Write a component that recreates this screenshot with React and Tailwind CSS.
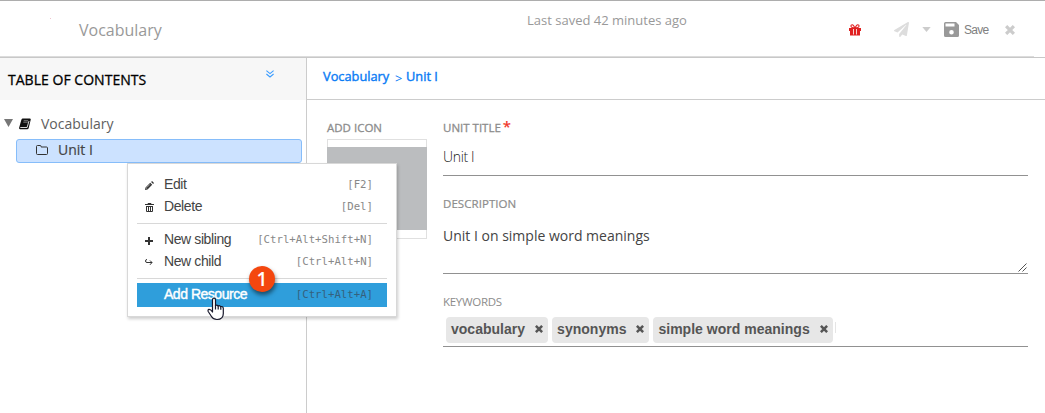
import React from "react";
import { FaPaperPlane } from "react-icons/fa";

function Cross({ className }) {
  return (
    <svg viewBox="0 0 10 10" className={className} fill="none" stroke="currentColor" strokeWidth="3.2">
      <path d="M1.100 1.100 8.900 8.900M8.900 1.100 1.100 8.900" />
    </svg>
  );
}

function Header() {
  return (
    <header className="relative flex h-[58px] shrink-0 border-t border-b border-t-[#adadad] border-b-[#c8c8c8] pl-[79px] text-[#999]">
      <span className="w-[448px] pt-[17px] text-[16px] leading-6">Vocabulary</span>
      <span className="w-[322px] pt-[9px] text-[13px] leading-5">Last saved 42 minutes ago</span>
      <div className="flex h-[57px] items-center">
        <svg viewBox="0 0 12 12" className="h-3 w-3" fill="#e02020">
          <path d="M0 4h12v3H0ZM1 7h10v4.500H1Z" />
          <path d="M5.700 4Q4.800.8 3.200.8 1.900.8 1.900 2.100 1.900 3.700 4 3.700H8Q10.100 3.700 10.100 2.100 10.100.8 8.800.8 7.200.8 6.300 4" fill="none" stroke="#e02020" strokeWidth="1.100" />
          <path d="M4.500 5v5.500M7.500 5v5.500" stroke="#fff" strokeWidth=".8" />
        </svg>
        <FaPaperPlane className="ml-[33px] h-[15px] w-[15px] text-[#ddd]" />
        <svg viewBox="0 0 10 6" className="ml-[13px] h-[5px] w-[9px] fill-[#ccc]"><path d="M0 0h10L5 6z" /></svg>
        <svg viewBox="0 0 15 15" className="ml-[13px] h-[15px] w-[15px]">
          <path fill="#999" fillRule="evenodd" d="M1.5 0H12l3 3v10.500a1.500 1.500 0 0 1-1.500 1.500h-12A1.500 1.500 0 0 1 0 13.500v-12A1.500 1.500 0 0 1 1.500 0ZM1.500 1.500v3h9v-3ZM7.500 8a2.300 2.300 0 1 0 0 4.600 2.300 2.300 0 0 0 0-4.600Z" />
        </svg>
        <span className="ml-[5px] w-[41px] pt-px font-['Liberation_Sans',sans-serif] text-[12px] leading-4 tracking-[-0.75px] text-[#808080]">Save</span>
        <Cross className="h-[10px] w-[10px] text-[#ccc]" />
      </div>
      <div className="absolute bottom-0 left-0 h-px w-[1034px] bg-[#dcdcdc]" />
    </header>
  );
}

function Sidebar() {
  return (
    <aside className="w-[307px] shrink-0 border-r border-[#ccc]">
      <div className="flex h-[42px] justify-between bg-[#f7f7f7] pr-[32px] pl-2">
        <h2 className="pt-[12px] text-[14px] leading-5 tracking-[0.03px] text-black [-webkit-text-stroke:0.3px_black]">TABLE OF CONTENTS</h2>
        <svg viewBox="0 0 8 8" className="mt-[12px] h-2 w-2" fill="none" stroke="#3b9cff" strokeWidth="1.1">
          <path d="M.4.6 4 3.600 7.600.6M.4 4 4 7 7.600 4" />
        </svg>
      </div>
      <div className="flex h-[39px] items-center pt-[9px] pl-[4px]">
        <svg viewBox="0 0 9 8" className="h-2 w-[9px] -translate-y-px fill-[#777]"><path d="M0 0h9L4.500 8z" /></svg>
        <svg viewBox="0 0 12 12" className="ml-[6px] h-3 w-3">
          <path d="M3.500.5h7.300q1.200.1.900 1.200L9.700 10q-.3 1.300-1.500 1.300H1.200Q-.2 11.100.2 9.600L2.300 2Q2.600.6 3.500.5Z" fill="#111" />
          <path d="M4.700 2.700h4.500M4.300 4.200h4.500" stroke="#aaa" strokeWidth=".7" />
          <path d="M1.300 9.500h6.800L10 3" fill="none" stroke="#eee" strokeWidth=".9" />
        </svg>
        <span className="ml-[10px] text-[14px] leading-5 text-[#606060]">Vocabulary</span>
      </div>
      <div className="ml-4 flex h-6 w-[286px] items-center rounded-[3px] border border-[#86bdfa] bg-[#cce2ff] pl-[19px]">
        <svg viewBox="0 0 12 10" className="h-[10px] w-3 -translate-y-px" fill="none" stroke="#333" strokeWidth="1">
          <path d="M.5 8.500v-7q0-1 1-1h2.700q.9 0 .9 1v.5h5.400q1 0 1 1v5.500q0 1-1 1h-9q-1 0-1-1Z" />
        </svg>
        <span className="ml-[10px] -translate-y-px text-[14px] leading-5 text-[#444] [-webkit-text-stroke:0.2px_#444]">Unit I</span>
      </div>
    </aside>
  );
}

function Label({ children, className = "tracking-[0px] [-webkit-text-stroke:0.3px_#8c8c8c]" }) {
  return <div className={`text-[11.5px] leading-4 text-[#8c8c8c] ${className}`}>{children}</div>;
}

function Tag({ children }) {
  return (
    <span className="flex h-[26px] items-center rounded-[4px] bg-[#e7e7e7] px-[5px] font-['Liberation_Sans',sans-serif] text-[14px] font-bold tracking-[0.015px] text-[#555]">
      <span className="-translate-y-px leading-5">{children}</span>
      <Cross className="ml-[10px] h-2 w-2 -translate-y-px" />
    </span>
  );
}

function Main() {
  return (
    <main className="min-w-0 flex-1">
      <nav className="flex h-[42px] border-b border-[#ccc] pt-[8px] pl-4 text-[12.8px] leading-5 font-normal text-[#0a7cf5] [-webkit-text-stroke:0.4px_#0a7cf5]">
        <span className="w-[72px]">Vocabulary</span>
        <span className="w-[11px] translate-y-[2px] [-webkit-text-stroke:0]">&gt;</span>
        <span>Unit I</span>
      </nav>
      <div className="flex pt-5 pl-5">
        <section className="w-[116px] shrink-0">
          <Label>ADD ICON</Label>
          <div className="mt-[3px] h-[100px] w-[100px] border border-[#e0e0e0] pt-[7px]">
            <div className="-mx-px h-[83px] bg-[#bbbdbf]" />
          </div>
        </section>
        <section className="w-[585px]">
          <div className="flex h-[19px]">
            <Label>UNIT TITLE</Label>
            <span className="ml-[2px] -mt-[4px] text-[15px] leading-5 font-semibold text-[#f03a2e]">*</span>
          </div>
          <div className="h-[37px] border-b border-[#919191] pt-[8px] text-[14px] leading-5 font-light tracking-[-0.35px] text-[#222]">Unit I</div>
          <Label className="mt-5 tracking-[0.06px] [-webkit-text-stroke:0.2px_#8c8c8c]">DESCRIPTION</Label>
          <div className="flex h-[62px] justify-between border-b border-[#919191] pt-[14px] text-[14px] leading-5 text-[#444]">
            <span>Unit I on simple word meanings</span>
            <svg viewBox="0 0 9 9" className="mt-auto mr-px mb-px h-[9px] w-[9px]" fill="none" stroke="#555"><path d="M.5 8.500l8-8M4.500 8.500l4-4" /></svg>
          </div>
          <Label className="mt-5 tracking-[-0.3px]">KEYWORDS</Label>
          <div className="flex h-[37px] gap-1 border-b border-[#919191] pt-[7px] pl-[3px]">
            <Tag>vocabulary</Tag>
            <Tag>synonyms</Tag>
            <Tag>simple word meanings</Tag>
            <span className="mt-[5px] -ml-[2px] h-[11px] w-px bg-[#e5e5e5]" />
          </div>
        </section>
      </div>
    </main>
  );
}

function MenuItem({ icon, label, keys, active }) {
  return (
    <div className={`flex items-center pr-[14px] pl-2 ${active ? "h-6 bg-[#2f9edb] text-white [-webkit-text-stroke:0.4px_white]" : "h-[22px] text-[#444]"}`}>
      <span className="flex w-[19px] pt-[3px]">{icon}</span>
      <span className={active ? "-translate-y-px text-[14px] leading-5 tracking-[-0.480px]" : "text-[14px] leading-5 tracking-[-0.400px]"}>{label}</span>
      <span className={`ml-auto font-['DejaVu_Sans_Mono',monospace] text-[10.700px] leading-4 [-webkit-text-stroke:0] ${active ? "text-[#35617c]" : "translate-y-px text-[#888]"}`}>{keys}</span>
    </div>
  );
}

function ContextMenu() {
  return (
    <div className="absolute top-[163px] left-[127px] h-[154px] w-[270px] border border-[#d8d8d8] bg-white px-[9px] pt-[9px] font-['Liberation_Sans',sans-serif] shadow-[1px_2px_3px_rgba(0,0,0,0.2)]">
      <MenuItem label="Edit" keys="[F2]" icon={
        <svg viewBox="0 0 10 10" className="h-[9px] w-[9px]"><path d="M0 10l.6-2.800L5.800 2 8 4.200 2.800 9.400ZM6.800 1 7.800 0 10 2.200l-1 1Z" fill="#333" /><path d="M1.200 7.500l1.300 1.300M2 7.200l3.500-3.500" stroke="#fff" strokeWidth=".6" /></svg>
      } />
      <MenuItem label="Delete" keys="[Del]" icon={
        <svg viewBox="0 0 9 9" className="h-[9px] w-[9px]" fill="none" stroke="#333"><path d="M0 1.500h9M3 1V.5h3V1M1.500 3v5.500h6V3M1 3.500h7M3.500 4v4M5.500 4v4" /></svg>
      } />
      <div className="mt-[6px] mb-[5px] h-px bg-[#d8d8d8]" />
      <div className="-mt-px">
        <MenuItem label="New sibling" keys="[Ctrl+Alt+Shift+N]" icon={
          <svg viewBox="0 0 8 8" className="h-2 w-2" stroke="#333" strokeWidth="2"><path d="M4 0v8M0 4h8" /></svg>
        } />
        <MenuItem label="New child" keys="[Ctrl+Alt+N]" icon={
          <svg viewBox="0 0 8 7" className="h-[7px] w-2" fill="none" stroke="#333"><path d="M2 .5Q.5.5.5 2T2 3.500h5M5 1.500l2 2-2 2.300" /></svg>
        } />
      </div>
      <div className="mt-[6px] mb-1 h-px bg-[#d8d8d8]" />
      <MenuItem active label="Add Resource" keys="[Ctrl+Alt+A]" />
      <div className="absolute top-[102px] left-[121px] flex h-[26px] w-[26px] items-center justify-center rounded-full bg-[#f4470f] font-['Open_Sans',sans-serif] text-[19px] leading-none font-semibold text-white shadow-[1px_3px_4px_rgba(0,0,0,0.5)]">1</div>
      <svg viewBox="0 0 18 24" className="absolute top-[133px] left-[79px] h-6 w-[18px]" fill="#fff" stroke="#17172a" strokeWidth="1.200" strokeLinejoin="round">
        <path d="M5.500 15V3q0-1.800 1.500-1.800T8.500 3v5.500q1.300-1 2.600.5 1.300-.8 2.500.6 2.400-.5 2.700 1.700v5.200q0 6-6.300 6-3.800 0-5.500-3L1.200 14.500q-.6-1.800.8-2.100 1.700-.2 3.500 2.600Z" />
        <path d="M8.500 8v4.500M11.200 9v3.500M13.800 9.800v3" fill="none" />
      </svg>
    </div>
  );
}

export default function App() {
  return (
    <div className="relative flex h-[413px] w-[1045px] flex-col overflow-hidden bg-white font-['Open_Sans',sans-serif]">
      <Header />
      <div className="flex flex-1">
        <Sidebar />
        <Main />
      </div>
      <div className="absolute top-[18px] left-[50px] h-px w-px bg-[#efc4ce]" />
      <ContextMenu />
    </div>
  );
}
